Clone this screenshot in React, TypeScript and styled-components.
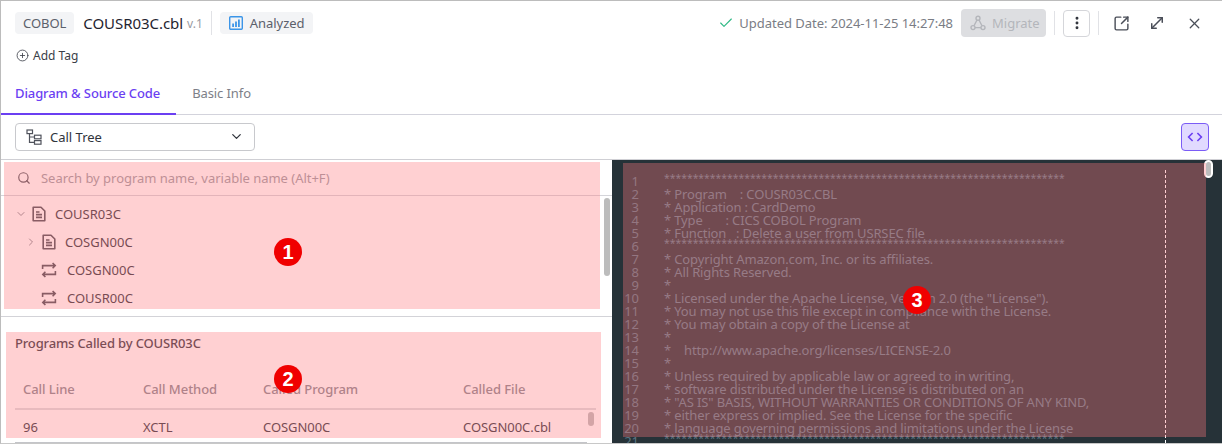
import React from "react";
import styled, { createGlobalStyle } from "styled-components";
import { Check, ChevronDown, ChevronRight, CirclePlus, EllipsisVertical, MoveDiagonal, Search, SquareArrowOutUpRight, X } from "lucide-react";

const Global = createGlobalStyle`
  html, body { margin: 0; padding: 0; background: #fff; }
  body { font-family: "Noto Sans", sans-serif; color: #2b2f38; overflow: hidden; }
  * { box-sizing: border-box; }
`;

const Frame = styled.div`
  position: relative; width: 1222px; height: 444px; overflow: hidden;
  display: flex; flex-direction: column;
  border-top: 1px solid #bcbcbc; border-left: 1px solid #bcbcbc; border-bottom: 1px solid #c8c8c8;
`;
const Header = styled.div`display: flex; align-items: center; height: 44px; padding: 0 19px 0 14px; flex: none;`;
const HeaderLeft = styled.div`display: flex; align-items: center; flex: 1;`;
const Chip = styled.span`
  display: inline-flex; align-items: center; height: 22px; padding: 0 9px; gap: 7px;
  background: #f3f4f6; border-radius: 4px; font-size: 13px; letter-spacing: -0.05px; color: #5b606b; line-height: 1;
`;
const LangChip = styled(Chip)`padding: 0 8px;`;
const FileName = styled.span`font-size: 15px; font-weight: 400; letter-spacing: -0.05px; color: #1f2430; margin-left: 9px;`;
const Version = styled.span`font-size: 12px; color: #9a9ca3; margin: 1px 0 0 4px;`;
const Divider = styled.span`width: 1px; height: 24px; background: #e1e2e6; flex: none; margin: 0 8px;`;
const Updated = styled.span`display: inline-flex; align-items: center; font-size: 13px; letter-spacing: -0.03px; color: #7a7d85; gap: 5px;`;
const Migrate = styled.span`
  display: inline-flex; align-items: center; gap: 6px; width: 85px; height: 28px; margin-left: 8px; padding-left: 9px;
  background: #dddee1; color: #b4b6bb; border-radius: 4px; font-size: 13px;
`;
const Kebab = styled.span`
  width: 27px; height: 27px; display: flex; align-items: center; justify-content: center;
  border: 1px solid #d5d6da; border-radius: 4px; color: #30343c;
`;
const IconBtn = styled.span`display: flex; align-items: center; color: #4a4e58; margin-left: ${p => p.$ml}px;`;
const TagRow = styled.div`display: flex; align-items: center; gap: 4px; height: 20px; padding-left: 15px; font-size: 12px; color: #3a3e48; flex: none;`;
const Tabs = styled.div`display: flex; height: 50px; border-bottom: 1px solid #d3d3dc; flex: none;`;
const Tab = styled.div`
  display: flex; align-items: center; height: 50px; font-size: 13px; letter-spacing: -0.1px;
  padding: 8px 16px 0 ${p => p.$first ? "14px" : "16px"};
  color: ${p => p.$active ? "#6b3ff2" : "#7d7f88"}; font-weight: ${p => p.$active ? 500 : 400};
  border-bottom: 2px solid ${p => p.$active ? "#6b3ff2" : "transparent"};
`;
const Toolbar = styled.div`display: flex; align-items: center; justify-content: space-between; height: 45px; padding: 0 13px 1px 14px; border-bottom: 1px solid #cfcfd4; flex: none;`;
const Select = styled.div`
  display: flex; align-items: center; width: 240px; height: 28px; padding: 0 10px 0 10px;
  border: 1px solid #c8c9cd; border-radius: 4px; font-size: 13px; color: #30343c; gap: 8px;
`;
const SelectLabel = styled.span`flex: 1;`;
const CodeBtn = styled.div`
  width: 28px; height: 28px; display: flex; align-items: center; justify-content: center;
  background: #e1daff; border: 1px solid #7b5cf6; border-radius: 4px; color: #6b3ff2;
`;
const Body = styled.div`display: flex; flex: 1; min-height: 0;`;
const Left = styled.div`width: 611px; flex: none; display: flex; flex-direction: column; position: relative;`;
const SearchRow = styled.div`display: flex; align-items: center; gap: 10px; height: 36px; padding: 0 0 0 16px; border-bottom: 1px solid #d5d5da; font-size: 13px; letter-spacing: -0.02px; color: #9b9ca3; flex: none;`;
const Tree = styled.div`height: 121px; padding-top: 4px; border-bottom: 1px solid #d3d3d8; flex: none; overflow: hidden;`;
const TreeRow = styled.div`display: flex; align-items: center; height: 28px; padding-left: ${p => p.$indent}px; font-size: 13px; color: #2f333c;`;
const Caret = styled.span`display: flex; width: 16px; color: #8a8c94; flex: none;`;
const TreeLabel = styled.span`margin-left: ${p => p.$ml}px;`;
const Programs = styled.div`flex: 1; padding: 17px 0 0 14px; position: relative; min-height: 0;`;
const Title = styled.div`font-size: 13px; font-weight: 500; letter-spacing: -0.15px; color: #33363f; line-height: 18px;`;
const TableHead = styled.div`
  display: grid; grid-template-columns: 120px 120px 200px 1fr; width: 581px; margin-top: 19px; height: 39px; align-items: center;
  padding: 0 0 1px 8px; border-bottom: 2px solid #dcdde1; font-size: 13px; font-weight: 500; letter-spacing: -0.05px; color: #85878f;
`;
const TableRow = styled(TableHead)`
  font-weight: 400; color: #2f333c; margin-top: 0; border-bottom: 2px solid #c4c5c9; height: 34px; padding: 2px 0 0 8px; width: 572px;
`;
const Thumb = styled.div`position: absolute; left: ${p => p.$x}px; top: ${p => p.$y}px; width: 6px; height: ${p => p.$h}px; border-radius: 3px; background: #bcbcbc;`;
const Code = styled.div`
  flex: 1; position: relative; background: #263238; overflow: hidden; padding: 15px 0 0 10px;
  display: flex; font-family: "Noto Sans", sans-serif; font-size: 13px; line-height: 13px; color: #607d8b;
`;
const Gutter = styled.div`width: 17px; text-align: right; flex: none; color: #5b7683;`;
const Lines = styled.div`margin-left: 25px; white-space: pre; letter-spacing: -0.13px;`;
const StarLine = styled.div`font-size: 10.4px; letter-spacing: 0; height: 13px; position: relative; top: -3px;`;
const Ruler = styled.div`position: absolute; left: 553px; top: 10px; bottom: 0; border-left: 1px dashed #fff;`;
const BigThumb = styled.div`position: absolute; left: 592px; top: 0; width: 9px; height: 18px; border: 2px solid #fff; border-radius: 5px; background: #bdbdbd;`;
const Mark = styled.div`
  position: absolute; left: ${p => p.$x}px; top: ${p => p.$y}px; width: ${p => p.$w}px; height: ${p => p.$h}px;
  background: rgba(255, 120, 125, 0.35); pointer-events: none;
`;
const Badge = styled.div`
  position: absolute; left: ${p => p.$x - 14}px; top: ${p => p.$y - 14}px; width: 28px; height: 28px; border-radius: 50%;
  background: #f00000; color: #fff; font: 700 20px/28px "Liberation Sans", sans-serif; text-align: center;
`;

const DocIcon = () => (
  <svg width="16" height="16" viewBox="0 0 16 16" fill="none" stroke="#4a4d56" strokeWidth="1.6" style={{ flex: "none" }}>
    <path d="M2.2 1.2h7.8l3.8 3.8v9.8H2.2z" strokeLinejoin="round" />
    <path d="M5 6h3.5M5 8.6h6M5 11.4h6" />
  </svg>
);
const LoopIcon = () => (
  <svg width="16" height="16" viewBox="0 0 16 16" fill="none" stroke="#4a4d56" strokeWidth="1.6" style={{ flex: "none" }}>
    <path d="M1.6 7V3.6h12.4M11.6 1l2.6 2.6-2.6 2.6M14.4 9v3.4H2M4.4 15l-2.6-2.6L4.4 9.8" />
  </svg>
);
const TreeIcon = () => (
  <svg width="16" height="16" viewBox="0 0 16 16" fill="none" stroke="#50535c" strokeWidth="1.2" style={{ flex: "none" }}>
    <rect x="1" y="1" width="5.5" height="3.6" /><rect x="8.5" y="6.2" width="6.5" height="3.6" /><rect x="8.5" y="11.6" width="6.5" height="3.6" />
    <path d="M3.5 4.6v8.8h5M3.5 8h5" />
  </svg>
);
const ChartIcon = () => (
  <svg width="14" height="14" viewBox="0 0 14 14" style={{ flex: "none" }}>
    <rect x="0.7" y="0.7" width="12.6" height="12.6" rx="1" fill="none" stroke="#3b95e8" strokeWidth="1.4" />
    <path d="M3.2 7.5h1.8v3.5H3.2zM6.1 5.6h1.8V11H6.1zM9 3.4h1.8V11H9z" fill="#3b95e8" />
  </svg>
);
const MigrateIcon = () => (
  <svg width="16" height="16" viewBox="0 0 16 16" fill="none" stroke="#b4b6bb" strokeWidth="1.4" style={{ flex: "none" }}>
    <circle cx="8" cy="3.2" r="2" /><circle cx="3" cy="12.6" r="2" /><circle cx="13" cy="12.6" r="2" />
    <path d="M7 5 4 10.8M9 5l3 5.8M5 12.6h6" />
  </svg>
);
const CodeIcon = () => (
  <svg width="16" height="12" viewBox="0 0 16 12" fill="none" stroke="currentColor" strokeWidth="1.6">
    <path d="M5.6 2 1.6 6l4 4M10.4 2l4 4-4 4" />
  </svg>
);

const star = "*".repeat(70);
const code = [
  star,
  "* Program    : COUSR03C.CBL",
  "* Application : CardDemo",
  "* Type       : CICS COBOL Program",
  "* Function   : Delete a user from USRSEC file",
  star,
  "* Copyright Amazon.com, Inc. or its affiliates.",
  "* All Rights Reserved.",
  "*",
  '* Licensed under the Apache License, Version 2.0 (the "License").',
  "* You may not use this file except in compliance with the License.",
  "* You may obtain a copy of the License at",
  "*",
  "*    http://www.apache.org/licenses/LICENSE-2.0",
  "*",
  "* Unless required by applicable law or agreed to in writing,",
  "* software distributed under the License is distributed on an",
  '* "AS IS" BASIS, WITHOUT WARRANTIES OR CONDITIONS OF ANY KIND,',
  "* either express or implied. See the License for the specific",
  "* language governing permissions and limitations under the License",
  star,
];

export default function App() {
  return (
    <>
      <Global />
      <Frame>
        <Header>
          <HeaderLeft>
            <LangChip>COBOL</LangChip>
            <FileName>COUSR03C.cbl</FileName>
            <Version>v.1</Version>
            <Divider />
            <Chip><ChartIcon />Analyzed</Chip>
          </HeaderLeft>
          <Updated><Check size={16} color="#2fb985" strokeWidth={1.7} />Updated Date: 2024-11-25 14:27:48</Updated>
          <Migrate><MigrateIcon />Migrate</Migrate>
          <Divider />
          <Kebab><EllipsisVertical size={16} strokeWidth={2.4} /></Kebab>
          <Divider />
          <IconBtn $ml={6}><SquareArrowOutUpRight size={17} strokeWidth={2} /></IconBtn>
          <IconBtn $ml={18}><MoveDiagonal size={18} strokeWidth={2} /></IconBtn>
          <IconBtn $ml={20}><X size={17} strokeWidth={1.8} /></IconBtn>
        </Header>
        <TagRow><CirclePlus size={13} strokeWidth={1.5} />Add Tag</TagRow>
        <Tabs>
          <Tab $active $first>Diagram &amp; Source Code</Tab>
          <Tab>Basic Info</Tab>
        </Tabs>
        <Toolbar>
          <Select><TreeIcon /><SelectLabel>Call Tree</SelectLabel><ChevronDown size={15} /></Select>
          <CodeBtn><CodeIcon /></CodeBtn>
        </Toolbar>
        <Body>
          <Left>
            <SearchRow><Search size={14} color="#50535c" strokeWidth={2} />Search by program name, variable name (Alt+F)</SearchRow>
            <Tree>
              <TreeRow $indent={14}><Caret><ChevronDown size={12} /></Caret><DocIcon /><TreeLabel $ml={8}>COUSR03C</TreeLabel></TreeRow>
              <TreeRow $indent={24}><Caret><ChevronRight size={12} /></Caret><DocIcon /><TreeLabel $ml={8}>COSGN00C</TreeLabel></TreeRow>
              <TreeRow $indent={40}><LoopIcon /><TreeLabel $ml={10}>COSGN00C</TreeLabel></TreeRow>
              <TreeRow $indent={40}><LoopIcon /><TreeLabel $ml={10}>COUSR00C</TreeLabel></TreeRow>
            </Tree>
            <Thumb $x={603} $y={38} $h={78} />
            <Programs>
              <Title>Programs Called by COUSR03C</Title>
              <TableHead><span>Call Line</span><span>Call Method</span><span>Called Program</span><span>Called File</span></TableHead>
              <TableRow><span>96</span><span>XCTL</span><span>COSGN00C</span><span>COSGN00C.cbl</span></TableRow>
              <Thumb $x={587} $y={95} $h={14} />
            </Programs>
          </Left>
          <Code>
            <Gutter>{code.map((_, i) => <div key={i}>{i + 1}</div>)}</Gutter>
            <Lines>{code.map((l, i) => l === star ? <StarLine key={i}>{l}</StarLine> : <div key={i}>{l}</div>)}</Lines>
            <Ruler />
            <BigThumb />
          </Code>
        </Body>
        <Mark $x={3} $y={161} $w={596} $h={147} />
        <Mark $x={5} $y={331} $w={595} $h={106} />
        <Mark $x={622} $y={162} $w={583} $h={274} />
        <Badge $x={287} $y={251}>1</Badge>
        <Badge $x={287} $y={378}>2</Badge>
        <Badge $x={916} $y={299}>3</Badge>
      </Frame>
    </>
  );
}
